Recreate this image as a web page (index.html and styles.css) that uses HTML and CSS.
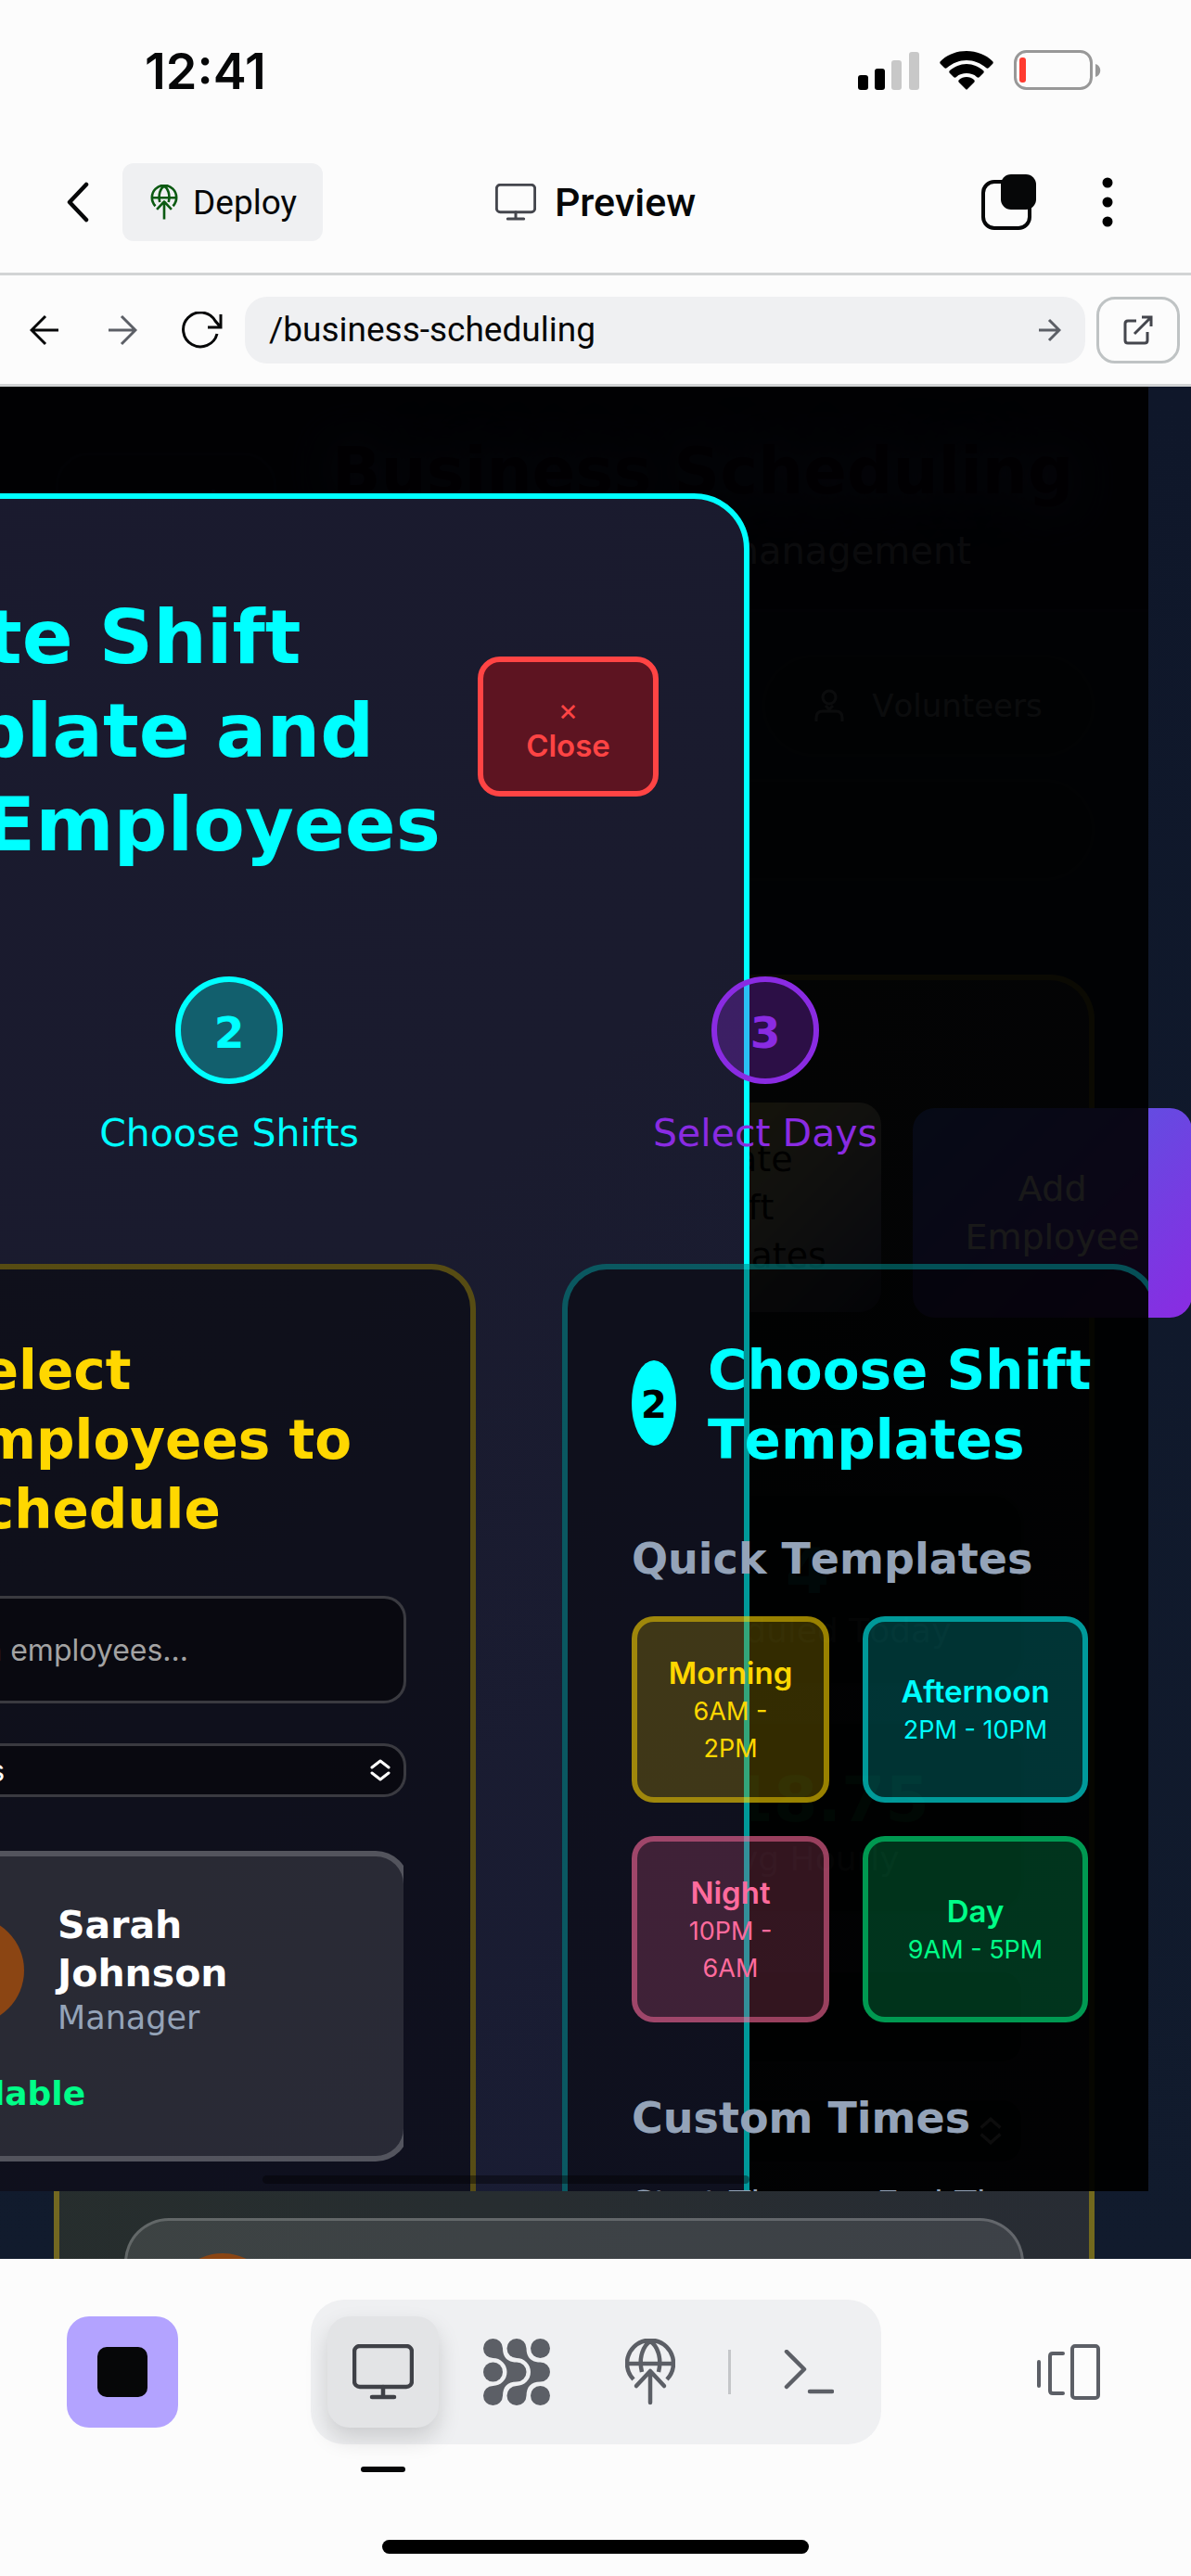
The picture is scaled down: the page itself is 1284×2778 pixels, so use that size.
FILE: index.html
```html
<!DOCTYPE html>
<html lang="en">
<head>
<meta charset="utf-8">
<meta name="viewport" content="width=device-width, initial-scale=1">
<title>Preview</title>
<link rel="stylesheet" href="styles.css">
</head>
<body>
<div class="status-bar">
  <span class="clock">12:41</span>
  <span class="status-icons">
    <svg width="66" height="42" viewBox="0 0 66 42" aria-hidden="true"><rect x="0" y="26" width="11" height="16" rx="3"/><rect x="18" y="19" width="11" height="23" rx="3"/><rect x="36" y="10" width="11" height="32" rx="3" fill="#c8c8c8"/><rect x="55" y="1" width="11" height="41" rx="3" fill="#c8c8c8"/></svg>
    <svg width="58" height="42" viewBox="0 0 58 42" aria-hidden="true"><path d="M29 0C40 0 50 4 57 11c1 1 1 2 0 3l-4 4c-1 1-2 1-3 0C44 13 37 10 29 10S14 13 8 18c-1 1-2 1-3 0l-4-4c-1-1-1-2 0-3C8 4 18 0 29 0z"/><path d="M29 14c7 0 13 3 18 7 1 1 1 2 0 3l-4 4c-1 1-2 1-3 0-3-3-7-4-11-4s-8 1-11 4c-1 1-2 1-3 0l-4-4c-1-1-1-2 0-3 5-4 11-7 18-7z"/><path d="M29 28c3 0 6 1 8 3 1 1 1 2 0 3l-7 7c-1 1-1 1-2 0l-7-7c-1-1-1-2 0-3 2-2 5-3 8-3z"/></svg>
    <svg width="94" height="44" viewBox="0 0 94 44" aria-hidden="true"><rect x="1.500" y="1.500" width="82" height="40" rx="12" fill="none" stroke="#989898" stroke-width="3"/><rect x="6" y="8" width="7" height="27" rx="3" fill="#ff3b30"/><path d="M88 15c7 2 7 12 0 14z" fill="#989898"/></svg>
  </span>
</div>

<header class="app-bar">
  <div class="app-left">
    <button class="icon-button" aria-label="Back"><svg width="24" height="44" viewBox="0 0 24 44"><path d="M21 3L3 22l18 19" fill="none" stroke="#060708" stroke-width="4.500" stroke-linecap="round" stroke-linejoin="round"/></svg></button>
    <button class="deploy"><svg width="30" height="38" viewBox="0 0 54 72" fill="none" stroke="#0b5a12" stroke-width="5" stroke-linejoin="round"><path d="M9 44A25 25 0 1 1 45 44M2 27h50M18 36C14 20 20 7 27 3c7 4 13 17 9 33M27 36v35M12 51l15-16 15 16"/></svg>Deploy</button>
  </div>
  <h1 class="app-title"><svg width="44" height="40" viewBox="0 0 66 60" fill="none" stroke="#44464d" stroke-width="4.500"><rect x="2" y="2" width="62" height="44" rx="6"/><path d="M33 46v11M20 57h26" stroke-linecap="round"/></svg>Preview</h1>
  <div class="app-right">
    <button class="icon-button" aria-label="Switch pane"><svg width="60" height="60" viewBox="0 0 60 60"><rect x="2" y="8" width="50" height="50" rx="12" fill="none" stroke="#060708" stroke-width="4"/><rect x="21" y="0" width="38" height="38" rx="11" fill="#060708"/></svg></button>
    <button class="icon-button" aria-label="More"><svg width="12" height="56" viewBox="0 0 12 56"><circle cx="6" cy="7" r="5.500"/><circle cx="6" cy="28" r="5.500"/><circle cx="6" cy="49" r="5.500"/></svg></button>
  </div>
</header>

<nav class="address-bar" aria-label="Preview address">
  <button class="icon-button" aria-label="Previous page"><svg width="32" height="34" viewBox="0 0 32 34" fill="none" stroke="#060708" stroke-width="3"><path d="M31 17H2M17 2L2 17l15 15"/></svg></button>
  <button class="icon-button" aria-label="Next page"><svg width="32" height="34" viewBox="0 0 32 34" fill="none" stroke="#5c5f66" stroke-width="3"><path d="M1 17h29M15 2l15 15-15 15"/></svg></button>
  <button class="icon-button" aria-label="Reload"><svg width="44" height="40" viewBox="0 0 44 40" fill="none" stroke="#060708" stroke-width="3"><path d="M38 24A18.500 18.500 0 1 1 36 10l6 7M42 3v14H28"/></svg></button>
  <div class="address">
    <input type="text" aria-label="Path" value="/business-scheduling">
    <button class="icon-button" aria-label="Go"><svg width="24" height="26" viewBox="0 0 24 26" fill="none" stroke="#5c5f66" stroke-width="3"><path d="M0 13h22M11 2l11 11-11 11"/></svg></button>
  </div>
  <button class="open-tab" aria-label="Open in new tab"><svg width="32" height="32" viewBox="0 0 32 32" fill="none" stroke="#44464d" stroke-width="3"><path d="M14 6H5q-3 0-3 3v18q0 3 3 3h18q3 0 3-3v-9M12 20L30 2M20 2h10v10"/></svg></button>
</nav>

<main class="viewport">
  <div class="workspace">
    <header class="ws-header">
      <button class="ws-back">← Back</button>
      <div class="ws-heading">
        <h2>Business Scheduling</h2>
        <p>Employee shift management</p>
      </div>
    </header>
    <div class="ws-tabs">
      <button class="pill">Employees</button>
      <button class="pill"><svg width="32" height="36" viewBox="0 0 32 36" fill="none" stroke="currentColor" stroke-width="3"><circle cx="16" cy="9" r="7"/><path d="M2 35v-4q0-7 7-7h14q7 0 7 7v4M12 18l4 4 4-4"/></svg>Volunteers</button>
      <button class="pill pill-wide">Schedules</button>
    </div>
    <section class="ws-card">
      <div class="ws-actions">
        <button class="create is-hovered">Create<br>Shift<br>Templates</button>
        <button class="add">Add<br>Employee</button>
      </div>
      <hr>
      <div class="stats">
        <div class="stat"><b>4</b><span>Employees</span></div>
        <div class="stat"><b>4</b><span>Scheduled Today</span></div>
        <div class="stat"><b>32</b><span>Total Hours</span></div>
        <div class="stat green"><b>$18.75</b><span>Avg Hourly</span></div>
      </div>
      <input class="ws-field" type="text" aria-label="Search staff">
      <div class="ws-field ws-select"><svg width="26" height="30" viewBox="0 0 22 26" fill="none" stroke="currentColor" stroke-width="3"><path d="M2 10l9-8 9 8M2 16l9 8 9-8"/></svg></div>
      <div class="ws-person"><span class="avatar"></span></div>
    </section>
  </div>

  <div class="overlay">
    <section class="modal" role="dialog" aria-labelledby="dialog-title">
      <header class="modal-header">
        <h2 id="dialog-title">Create Shift Template and Add Employees</h2>
        <button class="close"><span>×</span>Close</button>
      </header>
      <ol class="steps">
        <li class="step cyan"><span class="step-dot">2</span>Choose Shifts</li>
        <li class="step purple"><span class="step-dot">3</span>Select Days</li>
      </ol>
      <div class="panels">
        <section class="panel panel-gold">
          <h3><span class="badge"><i>1</i></span>Select Employees to Schedule</h3>
          <input class="search" type="text" aria-label="Search employees" placeholder="Search employees...">
          <div class="select-box">
            <select aria-label="Role"><option>All Roles</option></select>
            <svg width="22" height="26" viewBox="0 0 22 26" fill="none" stroke="#fff" stroke-width="3" stroke-linecap="round" stroke-linejoin="round"><path d="M2 10l9-7 9 7M2 16l9 7 9-7"/></svg>
          </div>
          <div class="people">
            <article class="person">
              <div class="person-top">
                <span class="avatar"></span>
                <div><h4>Sarah Johnson</h4><p>Manager</p></div>
              </div>
              <p class="available">Available</p>
            </article>
          </div>
        </section>
        <section class="panel panel-cyan">
          <h3><span class="badge"><i>2</i></span><span>Choose Shift<br>Templates</span></h3>
          <h4 class="group">Quick Templates</h4>
          <div class="templates">
            <button class="shift gold"><b>Morning</b>6AM - 2PM</button>
            <button class="shift cyan"><b>Afternoon</b>2PM - 10PM</button>
            <button class="shift pink"><b>Night</b>10PM - 6AM</button>
            <button class="shift green"><b>Day</b>9AM - 5PM</button>
          </div>
          <h4 class="group">Custom Times</h4>
          <div class="times"><span>Start Time</span><span>End Time</span></div>
        </section>
      </div>
    </section>
    <div class="scroll-thumb"></div>
  </div>
</main>

<footer class="toolbar">
  <div class="toolbar-row">
    <button class="stop" aria-label="Stop"><span></span></button>
    <div class="tabs">
      <button class="tab active" aria-label="Preview"><svg width="66" height="60" viewBox="0 0 66 60" fill="none" stroke="#3f4147" stroke-width="4.500"><rect x="2" y="2" width="62" height="44" rx="6"/><path d="M33 46v11M21 57h24" stroke-linecap="round"/></svg></button>
      <button class="tab" aria-label="Assistant"><svg width="72" height="72" viewBox="0 0 72 72" fill="#5c5f66"><circle cx="61.500" cy="10.500" r="10.500"/><circle cx="10.500" cy="36" r="10.500"/><circle cx="61.500" cy="61.500" r="10.500"/><path d="M10.500 0A10.500 10.500 0 0 1 21 10.500C21 20 26 25.500 36 25.500A10.500 10.500 0 0 1 36 46.500C26 46.500 21 52 21 61.500A10.500 10.500 0 1 1 10.500 51A15 15 0 0 0 10.500 21A10.500 10.500 0 0 1 10.500 0z"/><path d="M36 0A10.500 10.500 0 0 1 46.500 10.500C46.500 20 51.500 25.500 61.500 25.500A10.500 10.500 0 0 1 61.500 46.500C51.500 46.500 46.500 52 46.500 61.500A10.500 10.500 0 1 1 36 51A15 15 0 0 0 36 21A10.500 10.500 0 0 1 36 0z"/></svg></button>
      <button class="tab" aria-label="Deploy"><svg width="54" height="72" viewBox="0 0 54 72" fill="none" stroke="#5c5f66" stroke-width="4.500" stroke-linejoin="round"><path d="M9 44A25 25 0 1 1 45 44M2 27h50M18 36C14 20 20 7 27 3c7 4 13 17 9 33"/><path d="M27 36v33M12 51l15-16 15 16" stroke-linecap="round"/></svg></button>
      <span class="divider"></span>
      <button class="tab" aria-label="Shell"><svg width="54" height="48" viewBox="0 0 54 48" fill="none" stroke="#5c5f66" stroke-width="4.500" stroke-linecap="round" stroke-linejoin="round"><path d="M3 2l19 19L3 40M28 45h24"/></svg></button>
    </div>
    <button class="layout" aria-label="Layout"><svg width="70" height="60" viewBox="0 0 70 60" fill="none" stroke="#5c5f66" stroke-width="4" stroke-linecap="round"><rect x="39" y="2" width="28" height="56" rx="3"/><path d="M29 10H18q-3 0-3 3v37q0 3 3 3h11M3 19v26"/></svg></button>
  </div>
  <div class="home-bar"></div>
</footer>
</body>
</html>
```
FILE: styles.css
```css
* { box-sizing: border-box; margin: 0; }
body {
  display: flex;
  flex-direction: column;
  height: 100vh;
  background: #fcfcfc;
  color: #060708;
  font-family: Roboto, "Noto Sans", sans-serif;
}
button { font: inherit; color: inherit; border: 0; background: none; padding: 0; }
svg { display: block; flex: none; }
.icon-button { display: flex; align-items: center; }

/* Device status */
.status-bar {
  display: flex;
  justify-content: space-between;
  align-items: center;
  height: 142px;
  padding: 10px 97px 0 156px;
}
.clock { font: 600 54px Inter, sans-serif; }
.status-icons { display: flex; align-items: center; gap: 22px; }

/* App bar */
.app-bar {
  display: grid;
  grid-template-columns: 1fr auto 1fr;
  align-items: center;
  height: 155px;
  padding: 0 84px 0 72px;
  border-bottom: 3px solid #d2d4d5;
}
.app-left { display: flex; align-items: center; gap: 36px; }
.deploy {
  display: flex;
  align-items: center;
  gap: 16px;
  height: 84px;
  padding: 0 28px 0 30px;
  border-radius: 12px;
  background: #eff0f2;
  font-size: 37px;
}
.app-title { display: flex; align-items: center; gap: 20px; padding-left: 12px; font-size: 43px; font-weight: 500; }
.app-right { display: flex; justify-content: flex-end; align-items: center; gap: 70px; }

/* Address bar */
.address-bar {
  display: flex;
  align-items: center;
  height: 120px;
  padding: 0 12px 0 32px;
  border-bottom: 3px solid #d2d4d5;
}
.address-bar > .icon-button { margin-right: 52px; }
.address-bar > .icon-button:nth-child(3) { margin-right: 24px; }
.address-bar > .icon-button:nth-child(2) { margin-right: 48px; }
.address {
  display: flex;
  flex: 1;
  align-items: center;
  height: 72px;
  padding: 0 26px;
  border-radius: 24px;
  background: #eff0f2;
}
.address input { flex: 1; min-width: 0; border: 0; padding: 0; background: none; font: 37px Roboto, sans-serif; color: #060708; }
.open-tab {
  display: grid;
  place-items: center;
  width: 90px;
  height: 72px;
  margin-left: 12px;
  border: 3px solid #bfc3c4;
  border-radius: 20px;
}

/* Page shown in the preview */
.viewport {
  position: relative;
  flex: 1;
  min-height: 0;
  overflow: hidden;
  background: linear-gradient(#0f172a, #111b2d);
  font-family: "DejaVu Sans", Verdana, sans-serif;
  font-kerning: none;
}
.workspace { margin-right: 46px; }
.ws-header {
  display: flex;
  gap: 60px;
  height: 243px;
  padding: 43px 60px 0;
  border-bottom: 3px solid #141a34;
  background: #0c1226;
}
.ws-back { align-self: center; width: 238px; height: 110px; margin-bottom: 32px; border: 3px solid #141c34; border-radius: 36px; color: #18246a; font-size: 38px; }
.ws-heading { text-align: center; }
.ws-heading h2 { font-size: 69px; line-height: 96px; color: #12001c; text-shadow: 0 0 60px #3a4274, 0 0 30px #2a2f50; }
.ws-heading p { font-size: 40px; line-height: 76px; color: #6f7580; }
.ws-tabs { display: grid; grid-template-columns: 1fr 358px; gap: 24px; padding: 46px 58px 0; color: #767b82; font-size: 34px; }
.pill { display: flex; align-items: center; justify-content: center; gap: 30px; height: 110px; border: 3px solid #1c222e; border-radius: 56px; background: #101726; }
.pill-wide { grid-column: 1 / 3; justify-content: flex-start; padding-left: 60px; }
.ws-card {
  margin: 101px 58px 0;
  padding: 138px 70px 0;
  border: 6px solid rgba(255, 215, 0, .35);
  border-bottom: 0;
  border-radius: 48px 48px 0 0;
  background: linear-gradient(100deg, #262e2c, #282c34);
}
.ws-actions { display: flex; gap: 34px; width: 653px; margin-left: 498px; color: #fff; font-size: 38px; line-height: 52px; }
.ws-actions button { height: 226px; border-radius: 24px; flex: none; }
.ws-actions .create { width: 318px; color: #000; background: linear-gradient(135deg, #ffe040, #b0ae90 55%, #485088); }
.is-hovered { transform: translateY(-6px); }
.add { width: 301px; background: linear-gradient(135deg, #4169e1, #8a2be2); }
.ws-card hr { border: 0; border-top: 3px solid #30343a; margin: 116px 0 70px; }
.stats { display: grid; grid-template-columns: 1fr 1fr; gap: 38px 36px; }
.stat { display: flex; flex-direction: column; align-items: center; height: 208px; padding-top: 38px; border: 3px solid #16302c; border-radius: 36px; background: #0c1614; color: #009093; }
.stat b { font-size: 68px; line-height: 88px; }
.stat span { font-size: 36px; line-height: 40px; color: #565a60; }
.stat.green { color: #008a48; }
.ws-field { display: flex; width: 100%; height: 102px; margin-top: 60px; border: 3px solid #2a2e34; border-radius: 24px; background: #0e1416; color: #ddd; }
.ws-select { height: 72px; margin-top: 36px; align-items: center; justify-content: flex-end; padding-right: 20px; }
.ws-person { height: 300px; margin-top: 58px; padding: 35px 45px; border: 3px solid rgba(255, 255, 255, .2); border-radius: 48px; background: rgba(255, 255, 255, .1); }
.avatar { display: block; flex: none; width: 116px; height: 116px; border-radius: 50%; background: #8b4513; }

/* Dialog, scrolled sideways inside its overlay */
.overlay {
  position: absolute;
  inset: 0 46px 73px 0;
  overflow: hidden;
  background: rgba(0, 0, 0, .9);
}
.modal {
  position: absolute;
  top: 115px;
  left: -322px;
  width: 1130px;
  height: 2000px;
  padding: 92px;
  border: 6px solid #0ff;
  border-radius: 60px;
  background: linear-gradient(135deg, #1a1a2e, #1a1b2e 50%, #191d35);
}
.modal-header { display: flex; align-items: center; justify-content: space-between; height: 306px; }
.modal-header h2 { width: 720px; padding-top: 10px; font-size: 81px; line-height: 101px; color: #0ff; }
.close {
  display: flex;
  flex-direction: column;
  align-items: center;
  justify-content: center;
  width: 195px;
  height: 151px;
  padding-top: 4px;
  border: 6px solid #f44;
  border-radius: 24px;
  background: #5d1421;
  color: #f44;
  font: 600 33px/39px Inter, sans-serif;
}
.close span { font-weight: 400; }
.steps { display: flex; width: 1156px; margin: 117px 0 0 182px; padding: 0; list-style: none; }
.step { display: flex; flex: 1; flex-direction: column; align-items: center; gap: 27px; font-size: 41px; line-height: 52px; }
.step-dot { display: grid; place-items: center; width: 116px; height: 116px; padding-top: 6px; border: 6px solid; border-radius: 50%; font-size: 47px; font-weight: 700; }
.step.cyan { color: #0ff; }
.step.cyan .step-dot { background: rgba(0, 255, 255, .3); }
.step.purple { color: #8a2be2; }
.step.purple .step-dot { background: rgba(138, 43, 226, .3); }

.panels { display: grid; grid-template-columns: 737px 642px; gap: 93px; width: 1472px; margin-top: 115px; }
.panel { height: 1600px; padding: 72px 69px; border: 6px solid; border-radius: 48px; background: rgba(0, 0, 0, .4); }
.panel-gold { border-color: rgba(255, 215, 0, .3); }
.panel-cyan { border-color: rgba(0, 255, 255, .3); }
.panel h3 { display: flex; align-items: center; gap: 34px; font-size: 58px; line-height: 75px; }
.panel-gold h3 { color: #ffd700; }
.panel-cyan h3 { color: #0ff; white-space: nowrap; }
.badge { display: grid; place-items: center; flex: none; width: 48px; height: 92px; margin-bottom: 6px; padding-top: 4px; border-radius: 50%; background: currentColor; font-size: 40px; }
.badge i { color: #000; font-style: normal; }
.panel-gold .badge { width: 54px; }
.search { width: 100%; height: 116px; margin-top: 55px; padding: 0 42px; border: 3px solid rgba(255, 255, 255, .2); border-radius: 24px; background: rgba(0, 0, 0, .4); color: #fff; font: 32px Inter, sans-serif; }
.search::placeholder { color: #a3a3a3; }
.select-box { position: relative; display: flex; margin-top: 43px; }
.select-box select { width: 100%; height: 58px; appearance: none; padding: 0 22px; border: 3px solid rgba(255, 255, 255, .2); border-radius: 24px; background: rgba(0, 0, 0, .4); color: #fff; font: 32px Inter, sans-serif; }
.select-box svg { position: absolute; right: 17px; top: 16px; }
.people { margin: 58px 3px 0 0; overflow: hidden; }
.person { width: 590px; height: 335px; padding: 48px; border: 6px solid rgba(255, 255, 255, .2); border-radius: 36px; background: rgba(255, 255, 255, .11); color: #fff; }
.person-top { display: flex; align-items: center; gap: 36px; width: 430px; padding-left: 5px; }
.person h4 { font-size: 41px; line-height: 52px; }
.person p { font-size: 35px; line-height: 45px; color: #94a3b8; }
.person .available { margin-top: 36px; font-size: 36px; font-weight: 700; color: #00ff88; }
.group { font-size: 46px; line-height: 56px; color: #94a3b8; }
.panel h3 + .group { margin-top: 62px; }
.templates { display: grid; grid-template-columns: 213px 243px; gap: 36px; margin: 34px 0 75px; }
.shift { height: 201px; padding: 0 30px; border: 6px solid; border-radius: 24px; font: 27px/40px Inter, sans-serif; }
.shift b { display: block; font-size: 33px; font-weight: 600; line-height: 44px; }
.shift.cyan, .shift.green { padding: 0 20px; }
.shift.gold { color: #ffd700; background: rgba(255, 215, 0, .2); border-color: rgba(255, 215, 0, .5); }
.shift.cyan { color: #0ff; background: rgba(0, 255, 255, .2); border-color: rgba(0, 255, 255, .5); }
.shift.pink { color: #ff6b9d; background: rgba(255, 107, 157, .2); border-color: rgba(255, 107, 157, .5); }
.shift.green { color: #00ff88; background: rgba(0, 255, 136, .2); border-color: rgba(0, 255, 136, .5); }
.times { display: grid; grid-template-columns: 228px 228px; gap: 36px; margin-top: 42px; font-size: 38px; color: #94a3b8; }
.scroll-thumb { position: absolute; left: 283px; right: 430px; bottom: 8px; height: 9px; border-radius: 5px; background: rgba(0, 0, 0, .4); }

/* Bottom toolbar */
.toolbar { height: 342px; padding: 44px 72px 0; background: #fcfcfc; }
.toolbar-row { display: flex; align-items: center; justify-content: space-between; }
.toolbar button { display: grid; place-items: center; width: 120px; height: 120px; border-radius: 24px; }
.toolbar .stop { background: #b3a3ff; }
.stop span { width: 54px; height: 54px; border-radius: 10px; background: #060708; }
.tabs { display: flex; align-items: center; gap: 24px; padding: 18px; border-radius: 36px; background: #eff0f2; }
.tab { position: relative; }
.toolbar .tab.active { background: #e3e4e6; box-shadow: 0 12px 24px rgba(0, 0, 0, .15); }
.tab.active::after { content: ""; position: absolute; left: 36px; bottom: -48px; width: 48px; height: 6px; border-radius: 3px; background: #060708; }
.divider { width: 3px; height: 48px; background: #c4c6c9; }
.home-bar { width: 460px; height: 15px; margin: 103px auto 0; border-radius: 8px; background: #000; }
```
